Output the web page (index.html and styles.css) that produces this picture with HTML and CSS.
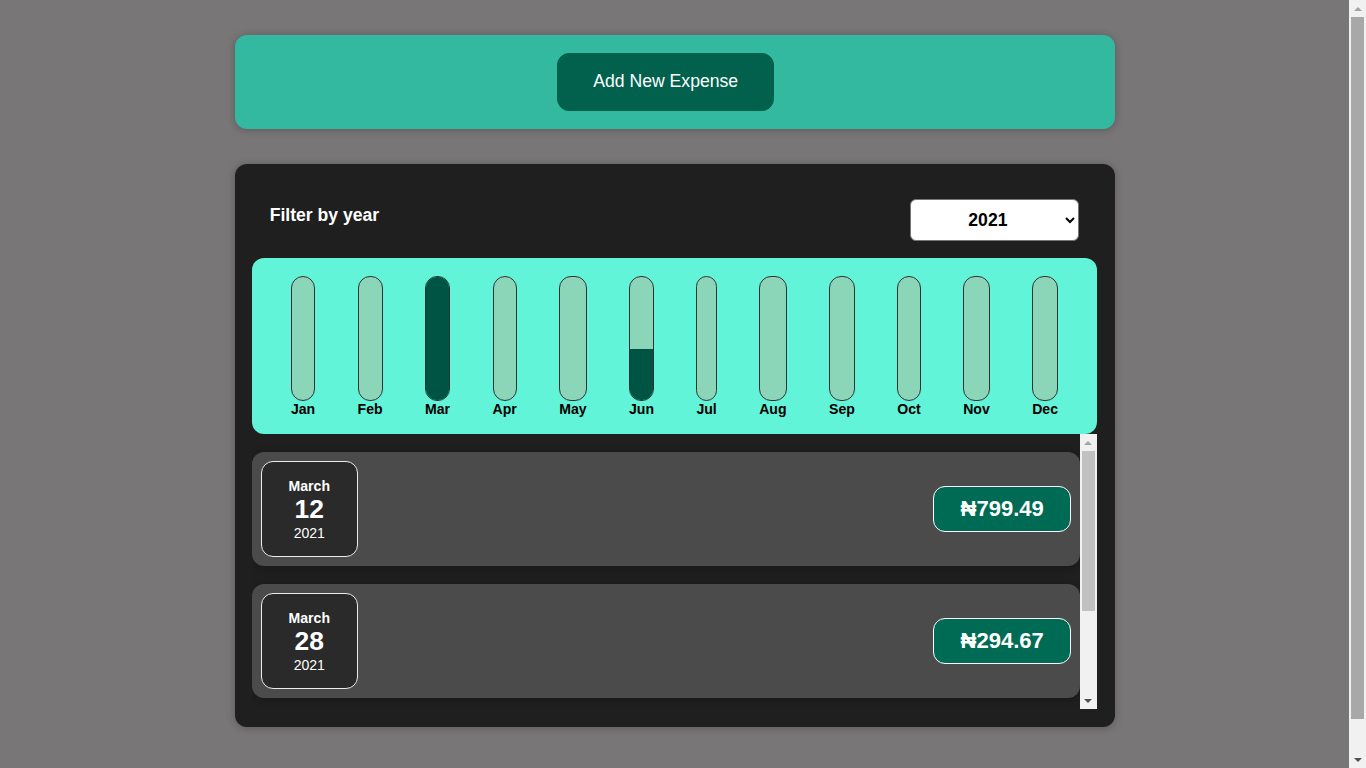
FILE: index.html
```html
<!DOCTYPE html>
<html lang="en">
<head>
<meta charset="utf-8">
<title>Expense Tracker</title>
<link rel="stylesheet" href="styles.css">
</head>
<body>
<div class="app">
  <div class="new-expense card">
    <button class="add-btn" type="button">Add New Expense</button>
  </div>

  <div class="expenses card">
    <div class="expenses-filter">
      <div class="expenses-filter__control">
        <label class="filter-label">Filter by year</label>
        <select class="year-select">
          <option>2022</option>
          <option selected>2021</option>
          <option>2020</option>
          <option>2019</option>
        </select>
      </div>
    </div>

    <div class="chart">
      <div class="chart-bar"><div class="chart-bar__inner"><div class="chart-bar__fill" style="height:0%"></div></div><div class="chart-bar__label">Jan</div></div>
      <div class="chart-bar"><div class="chart-bar__inner"><div class="chart-bar__fill" style="height:0%"></div></div><div class="chart-bar__label">Feb</div></div>
      <div class="chart-bar"><div class="chart-bar__inner"><div class="chart-bar__fill" style="height:100%"></div></div><div class="chart-bar__label">Mar</div></div>
      <div class="chart-bar"><div class="chart-bar__inner"><div class="chart-bar__fill" style="height:0%"></div></div><div class="chart-bar__label">Apr</div></div>
      <div class="chart-bar"><div class="chart-bar__inner"><div class="chart-bar__fill" style="height:0%"></div></div><div class="chart-bar__label">May</div></div>
      <div class="chart-bar"><div class="chart-bar__inner"><div class="chart-bar__fill" style="height:41%"></div></div><div class="chart-bar__label">Jun</div></div>
      <div class="chart-bar"><div class="chart-bar__inner"><div class="chart-bar__fill" style="height:0%"></div></div><div class="chart-bar__label">Jul</div></div>
      <div class="chart-bar"><div class="chart-bar__inner"><div class="chart-bar__fill" style="height:0%"></div></div><div class="chart-bar__label">Aug</div></div>
      <div class="chart-bar"><div class="chart-bar__inner"><div class="chart-bar__fill" style="height:0%"></div></div><div class="chart-bar__label">Sep</div></div>
      <div class="chart-bar"><div class="chart-bar__inner"><div class="chart-bar__fill" style="height:0%"></div></div><div class="chart-bar__label">Oct</div></div>
      <div class="chart-bar"><div class="chart-bar__inner"><div class="chart-bar__fill" style="height:0%"></div></div><div class="chart-bar__label">Nov</div></div>
      <div class="chart-bar"><div class="chart-bar__inner"><div class="chart-bar__fill" style="height:0%"></div></div><div class="chart-bar__label">Dec</div></div>
    </div>

    <div class="list-wrap">
      <ul class="expenses-list">
        <li class="expense-item">
          <div class="expense-date">
            <div class="expense-date__month">March</div>
            <div class="expense-date__day">12</div>
            <div class="expense-date__year">2021</div>
          </div>
          <div class="expense-item__description">
            <div class="expense-item__price">₦799.49</div>
          </div>
        </li>
        <li class="expense-item">
          <div class="expense-date">
            <div class="expense-date__month">March</div>
            <div class="expense-date__day">28</div>
            <div class="expense-date__year">2021</div>
          </div>
          <div class="expense-item__description">
            <div class="expense-item__price">₦294.67</div>
          </div>
        </li>
      </ul>
      <div class="fake-scroll list-scroll" aria-hidden="true">
        <div class="fake-scroll__btn"><span class="arrow-up"></span></div>
        <div class="fake-scroll__track"><div class="fake-scroll__thumb"></div></div>
        <div class="fake-scroll__btn"><span class="arrow-down"></span></div>
      </div>
    </div>
  </div>
</div>

<div class="fake-scroll page-scroll" aria-hidden="true">
  <div class="fake-scroll__btn"><span class="arrow-up"></span></div>
  <div class="fake-scroll__track"><div class="fake-scroll__thumb"></div></div>
  <div class="fake-scroll__btn"><span class="arrow-down"></span></div>
</div>
</body>
</html>
```

FILE: styles.css
```css
* {
  box-sizing: border-box;
}

html {
  font-family: "Liberation Sans", Arial, "DejaVu Sans", sans-serif;
  font-size: 110%;
}

body {
  margin: 0;
  padding: 0 17px 42px 0;
  background-color: #787676;
}

/* emulated classic scrollbars */
.fake-scroll {
  width: 17px;
  background-color: #f1f1f1;
  display: flex;
  flex-direction: column;
  flex-shrink: 0;
}

.page-scroll {
  position: fixed;
  top: 0;
  right: 0;
  height: 100vh;
}

.fake-scroll__btn {
  height: 17px;
  flex-shrink: 0;
  display: flex;
  align-items: center;
  justify-content: center;
}

.arrow-up {
  width: 0;
  height: 0;
  border-left: 4px solid transparent;
  border-right: 4px solid transparent;
  border-bottom: 4px solid #a3a3a3;
}

.arrow-down {
  width: 0;
  height: 0;
  border-left: 4px solid transparent;
  border-right: 4px solid transparent;
  border-top: 4px solid #505050;
}

.fake-scroll__track {
  flex: 1;
  padding: 0 2px;
}

.fake-scroll__thumb {
  width: 100%;
}

.page-scroll .fake-scroll__thumb {
  height: 95.6%;
  background-color: #a8a8a8;
}

.list-scroll .fake-scroll__thumb {
  height: 66.4%;
  background-color: #c1c1c1;
}

.card {
  border-radius: 12px;
  box-shadow: 0 1px 8px rgba(0, 0, 0, 0.25);
}

.new-expense {
  background-color: #33b9a0;
  padding: 1rem;
  margin: 2rem auto;
  width: 50rem;
  max-width: 95%;
  display: flex;
  justify-content: center;
}

.add-btn {
  font: inherit;
  cursor: pointer;
  padding: 1rem 2rem;
  border: 1px solid #01614d;
  background-color: #01614d;
  color: #ffffff;
  border-radius: 12px;
  margin-right: 1rem;
}

.expenses {
  padding: 1rem;
  background-color: #1f1f1f;
  margin: 2rem auto;
  width: 50rem;
  max-width: 95%;
}

.expenses-filter {
  color: #ffffff;
  padding: 0 1rem;
}

.expenses-filter__control {
  display: flex;
  width: 100%;
  align-items: center;
  justify-content: space-between;
  margin: 1rem 0;
}

.filter-label {
  font-weight: bold;
  margin-bottom: 0.5rem;
}

.year-select {
  font: inherit;
  font-weight: bold;
  width: 169px;
  padding: 0.5rem 0 0.5rem 53px;
  border-radius: 6px;
  background-color: #ffffff;
  color: #000000;
  border: 1px solid #767676;
}

.chart {
  padding: 1rem;
  border-radius: 12px;
  background-color: #61f4d8;
  text-align: center;
  display: flex;
  justify-content: space-around;
  height: 10rem;
}

.chart-bar {
  height: 100%;
  display: flex;
  flex-direction: column;
  align-items: center;
}

.chart-bar__inner {
  height: 100%;
  width: 100%;
  border: 1px solid #313131;
  border-radius: 12px;
  background-color: #8bd6b9;
  overflow: hidden;
  display: flex;
  flex-direction: column;
  justify-content: flex-end;
}

.chart-bar__fill {
  background-color: #005443;
  width: 100%;
}

.chart-bar__label {
  font-weight: bold;
  font-size: 0.8rem;
  text-align: center;
  color: #000000;
}

.list-wrap {
  display: flex;
  height: 275px;
}

.expenses-list {
  flex: 1;
  list-style: none;
  padding: 0;
  margin: 0;
  overflow-y: auto;
  scrollbar-width: none;
}

.expense-item {
  display: flex;
  justify-content: space-between;
  align-items: center;
  box-shadow: 0 2px 8px rgba(0, 0, 0, 0.25);
  padding: 0.5rem;
  margin: 1rem 0;
  border-radius: 12px;
  background-color: #4b4b4b;
}

.expense-date {
  display: flex;
  flex-direction: column;
  width: 5.5rem;
  height: 5.5rem;
  padding-top: 2px;
  border: 1px solid #ececec;
  background-color: #2a2a2a;
  color: #ffffff;
  border-radius: 12px;
  align-items: center;
  justify-content: center;
}

.expense-date__month {
  font-size: 0.8rem;
  font-weight: bold;
}

.expense-date__day {
  font-size: 1.5rem;
  font-weight: bold;
}

.expense-date__year {
  font-size: 0.8rem;
}

.expense-item__description {
  display: flex;
  flex: 1;
  justify-content: flex-end;
  align-items: center;
}

.expense-item__price {
  font-size: 1.25rem;
  font-weight: bold;
  color: #ffffff;
  background-color: #006b54;
  border: 1px solid #ffffff;
  padding: 0.5rem 1.5rem;
  border-radius: 12px;
}
```
